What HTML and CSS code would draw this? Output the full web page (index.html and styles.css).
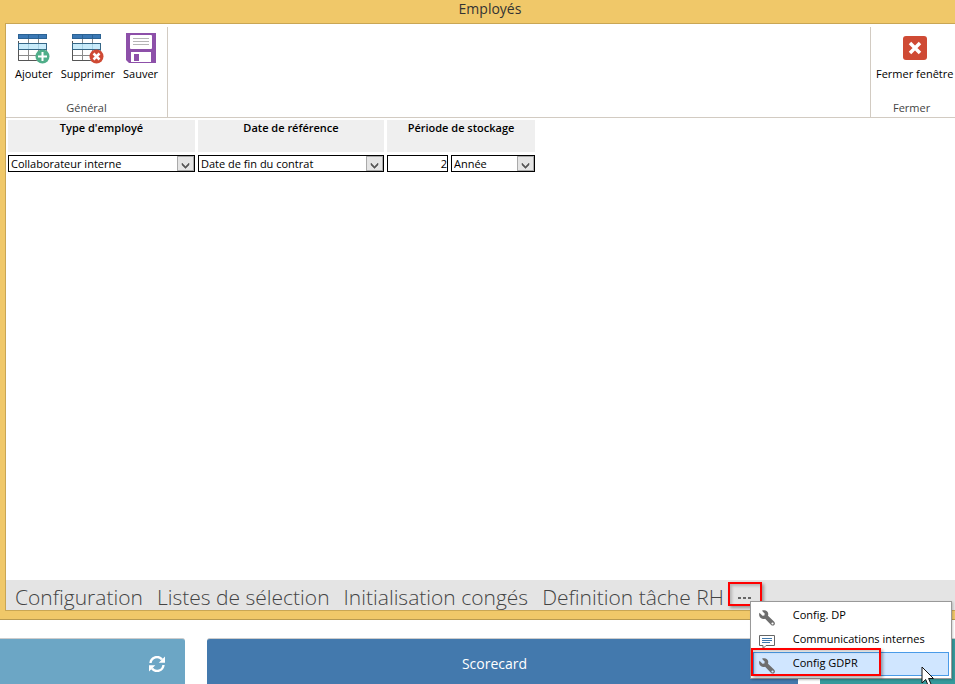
FILE: index.html
```html
<!DOCTYPE html>
<html lang="fr">
<head>
<meta charset="utf-8">
<meta name="viewport" content="width=device-width, initial-scale=1">
<title>Employés</title>
<link rel="stylesheet" href="styles.css">
</head>
<body>
<svg class="symbols" aria-hidden="true">
  <symbol id="grid" viewBox="0 0 32 32">
    <path d="M.5 10v17.500h28V10M10.500 5v22M20.500 5v22M0 22.500h29" fill="none" stroke="#8a8a8a"/>
    <path d="M.5 8v19.500h18" fill="none" stroke="#555"/>
    <rect x=".5" y="1.500" width="28" height="4" fill="#3a78b5" stroke="#2c6394"/>
    <path d="M10.500 2v3M20.500 2v3" stroke="#2c6394"/>
    <rect x=".5" y="10.500" width="28" height="6" fill="#c9ecfb" stroke="#356787"/>
    <path d="M10.500 11v5M20.500 11v5" stroke="#a9d3e6"/>
  </symbol>
  <symbol id="wrench" viewBox="0 0 16 16">
    <path d="M4.200.3C6.700-.3 9 1.200 9.200 3.600c.1.800 0 1.500-.2 2.100l6 5.900c1.100 1.100 1.200 2.500.3 3.400-.9.900-2.400.8-3.400-.3L6.100 8.800C3.500 9.700.7 8.200.2 5.600 0 4.600.1 3.600.5 2.800L3.500 5.700l1.900-.2.300-2L2.900.8zM13.500 12.400a1.100 1.100 0 1 0 0 2.200 1.100 1.100 0 0 0 0-2.200z" fill="#6e6e6e" fill-rule="evenodd"/>
  </symbol>
  <symbol id="arrow" viewBox="0 0 17 15">
    <rect x=".5" y=".5" width="16" height="14" fill="#e5e5e5" stroke="#aaa"/>
    <path d="M5 7l3.500 3.500L12 7v2L8.500 12.500 5 9z" fill="#555" stroke="#555" stroke-width=".5"/>
  </symbol>
</svg>

<section class="window">
  <h1 class="title">Employés</h1>
  <div class="frame">
    <div class="ribbon">
      <div class="group">
        <div class="tools">
          <button class="tool" type="button">
            <svg width="32" height="32" viewBox="0 0 32 32" aria-hidden="true"><use href="#grid"/><circle cx="24.500" cy="23.500" r="7" fill="#4fae89"/><path d="M24.500 19v9M20 23.500h9" stroke="#fff" stroke-width="2"/></svg>
            Ajouter
          </button>
          <button class="tool" type="button">
            <svg width="32" height="32" viewBox="0 0 32 32" aria-hidden="true"><use href="#grid"/><circle cx="24.500" cy="23.500" r="7" fill="#cf4a34"/><path d="M21.500 20.500l6 6M27.500 20.500l-6 6" stroke="#fff" stroke-width="2.500"/></svg>
            Supprimer
          </button>
          <button class="tool" type="button">
            <svg width="32" height="32" viewBox="0 0 32 32" aria-hidden="true"><path d="M1 0h30v30H4l-3-3z" fill="#8d50a9"/><rect x="5" y="2" width="22" height="14" rx="1" fill="#fff"/><path d="M8 5.500h16M8 8.500h16M8 11.500h16" stroke="#b5b5b5"/><path d="M6 19h20v10H6z" fill="#fff"/><path d="M9 21h5v7H9z" fill="#8d50a9"/></svg>
            Sauver
          </button>
        </div>
        <span class="caption">Général</span>
      </div>
      <div class="group group-close">
        <div class="tools">
          <button class="tool" type="button">
            <svg width="32" height="32" viewBox="0 0 32 32" aria-hidden="true"><rect x="4" y="3" width="24" height="24" rx="3" fill="#cf4a34"/><path d="M11 10l10 10M21 10L11 20" stroke="#fff" stroke-width="3.500"/></svg>
            Fermer fenêtre
          </button>
        </div>
        <span class="caption">Fermer</span>
      </div>
    </div>

    <main class="content">
      <table class="rules">
        <thead>
          <tr><th class="type">Type d'employé</th><th class="reference">Date de référence</th><th class="period">Période de stockage</th></tr>
        </thead>
        <tbody>
          <tr>
            <td><div class="pick"><select aria-label="Type d'employé"><option>Collaborateur interne</option></select><svg class="arrow" aria-hidden="true"><use href="#arrow"/></svg></div></td>
            <td><div class="pick"><select aria-label="Date de référence"><option>Date de fin du contrat</option></select><svg class="arrow" aria-hidden="true"><use href="#arrow"/></svg></div></td>
            <td><div class="duration">
              <input class="amount" type="text" value="2" aria-label="Durée">
              <div class="pick"><select aria-label="Unité"><option>Année</option></select><svg class="arrow" aria-hidden="true"><use href="#arrow"/></svg></div>
            </div></td>
          </tr>
        </tbody>
      </table>
    </main>

    <nav class="tabs">
      <a href="#configuration">Configuration</a>
      <a href="#listes">Listes de sélection</a>
      <a href="#conges">Initialisation congés</a>
      <a href="#taches">Definition tâche RH</a>
      <div class="more">
        <button class="more-button" type="button" aria-label="Plus"><svg width="16" height="4" viewBox="0 0 16 4" aria-hidden="true"><path d="M1 1h3v2H1zM6 1h3v2H6zM11 1h3v2h-3z" fill="#666"/></svg></button>
        <div class="menu">
          <button class="item" type="button"><svg width="16" height="16" aria-hidden="true"><use href="#wrench"/></svg>Config. DP</button>
          <button class="item" type="button"><svg width="16" height="16" viewBox="0 0 16 16" aria-hidden="true"><path d="M.5 1.500h15v10H7l-3 3v-3H.5z" fill="#fff" stroke="#666"/><path d="M3 4.500h10M3 6.500h10M3 8.500h8" stroke="#3f78ac"/></svg>Communications internes</button>
          <button class="item selected" type="button"><svg width="16" height="16" aria-hidden="true"><use href="#wrench"/></svg>Config GDPR</button>
          <span class="marker"></span>
          <svg class="pointer" width="14" height="22" viewBox="0 0 14 22" aria-hidden="true"><path d="M1 1v16l3.700-3.500L7.300 20l3-1.200L7.600 12.500H12.500z" fill="#fff" stroke="#111"/></svg>
        </div>
      </div>
    </nav>
  </div>
</section>

<div class="tiles">
  <section class="tile tile-light"><button class="refresh" type="button" aria-label="Actualiser"><svg width="16" height="16" viewBox="0 0 16 16" aria-hidden="true"><path d="M1.500 7A6.500 6.500 0 0 1 13 3.500M14.500 9A6.500 6.500 0 0 1 3 12.500" fill="none" stroke="#fff" stroke-width="2.400"/><path d="M16 .5v6.300H9.700zM0 15.500V9.200h6.300z" fill="#fff"/></svg></button></section>
  <section class="tile tile-blue"><h2>Scorecard</h2></section>
  <section class="tile tile-teal"></section>
</div>
</body>
</html>
```
FILE: styles.css
```css
* { box-sizing: border-box; }

body {
  margin: 0;
  min-height: 100vh;
  display: flex;
  flex-direction: column;
  overflow: hidden;
  background: #fff;
  color: #000;
  font: 11px/16px "Open Sans", "Noto Sans", sans-serif;
}

button, select, input {
  margin: 0;
  font: inherit;
  color: inherit;
}

button {
  padding: 0;
  border: 0;
  background: none;
}

.symbols {
  position: absolute;
  width: 0;
  height: 0;
}

.window {
  flex: 1;
  display: flex;
  flex-direction: column;
  padding: 0 0 8px 5px;
  background: #f0c869;
  border-bottom: 1px solid #b99a50;
}

.title {
  margin: 0;
  height: 23px;
  padding-left: 20px;
  font-size: 14px;
  line-height: 17px;
  font-weight: 400;
  text-align: center;
  color: #333;
}

.frame {
  flex: 1;
  display: flex;
  flex-direction: column;
  background: #fff;
  border: 1px solid #c9a654;
  border-right: 0;
}

.ribbon {
  display: flex;
  justify-content: space-between;
  padding-top: 3px;
  border-bottom: 1px solid #d2cbc2;
}

.group {
  height: 90px;
  display: flex;
  flex-direction: column;
  justify-content: space-between;
  align-items: center;
  width: 162px;
  padding: 6px 0 1px;
  border-right: 1px solid #d2cbc2;
}

.group-close {
  width: 85px;
  padding-left: 5px;
  align-items: flex-start;
  border-right: 0;
  border-left: 1px solid #d2cbc2;
}

.group-close .caption { padding-left: 17px; }

.tools {
  display: flex;
  gap: 8px;
}

.tool {
  display: flex;
  flex-direction: column;
  align-items: center;
  gap: 1px;
  white-space: nowrap;
}

.caption { color: #444; }

.content { flex: 1; }

.rules {
  border-spacing: 3px;
  margin: -1px 0 0 -1px;
}

.rules th {
  height: 32px;
  padding: 0;
  vertical-align: top;
  background: #efefef;
  font-weight: 600;
}

.rules td { padding: 0; }

.type { width: 187px; }

.reference { width: 186px; }

.period { width: 148px; }

.pick {
  flex: 1;
  display: flex;
  position: relative;
}

.pick select,
.amount {
  width: 100%;
  height: 17px;
  padding: 0 2px;
  border: 1px solid #000;
  border-radius: 0;
  background: #fff;
  appearance: none;
  line-height: 15px;
}

.duration {
  display: flex;
  gap: 3px;
}

.duration .amount {
  width: 61px;
  padding: 0;
  text-align: right;
}

.arrow {
  position: absolute;
  top: 1px;
  right: 1px;
  width: 17px;
  height: 15px;
  pointer-events: none;
}

.tabs {
  display: flex;
  align-items: flex-start;
  gap: 14px;
  height: 30px;
  padding-left: 9px;
  background: #e4e4e4;
  white-space: nowrap;
}

.tabs a {
  font-size: 21px;
  line-height: 34px;
  font-weight: 300;
  color: #444;
  text-decoration: none;
}

.more {
  position: relative;
  margin: 2px 0 0 -10px;
}

.more-button {
  display: flex;
  align-items: center;
  justify-content: center;
  width: 34px;
  height: 24px;
  padding-top: 8px;
  border: 2px solid #f00;
  box-shadow: 2px 2px 3px #0005, inset 2px 2px 3px #0003;
}

.menu {
  position: absolute;
  z-index: 1;
  top: 19px;
  left: 22px;
  width: 202px;
  padding: 2px;
  background: #fff;
  border: 1px solid #999;
  box-shadow: 1px 1px 2px #0003;
}

.item {
  display: flex;
  align-items: center;
  gap: 18px;
  width: 100%;
  height: 24px;
  padding: 0 5px 2px;
  border: 1px solid transparent;
}

.item svg { margin-top: 5px; }

.selected {
  background: #d0e6ff;
  border-color: #4a9be8;
}

.marker {
  position: absolute;
  top: 46px;
  left: 0;
  width: 130px;
  height: 28px;
  border: 2px solid #f00;
  box-shadow: 2px 2px 3px #0005, inset 2px 2px 3px #0003;
}

.pointer {
  position: absolute;
  top: 64px;
  left: 170px;
}

.tiles {
  display: flex;
  gap: 22px;
  height: 64px;
  padding-top: 18px;
}

.tile {
  display: flex;
  align-items: center;
  justify-content: center;
  border-top: 1px solid #ccc;
}

.tile-light {
  flex: 0 0 185px;
  justify-content: flex-end;
  padding: 4px 20px 0 0;
  border-radius: 0 3px 0 0;
  background: #6ca6c5;
}

.tile-blue {
  flex: 1;
  padding-top: 4px;
  padding-right: 16px;
  border-radius: 3px 3px 0 0;
  background: #4379ad;
}

.tile-teal {
  flex: 0 0 135px;
  border-radius: 3px 0 0 0;
  background: #359a9c;
}

.tile h2 {
  margin: 0;
  color: #fff;
  font-size: 14px;
  font-weight: 400;
}

.refresh { display: flex; }
```
